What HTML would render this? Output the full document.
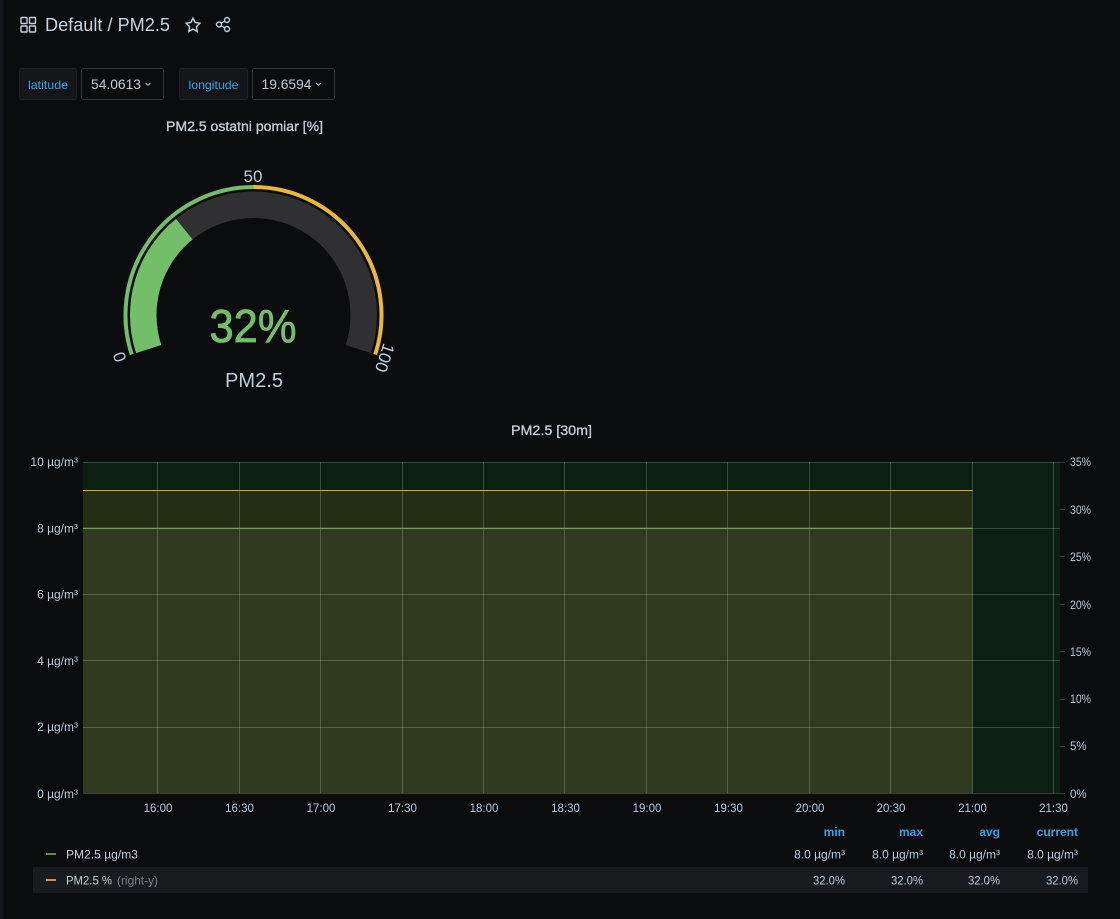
<!DOCTYPE html>
<html><head><meta charset="utf-8"><style>
html,body{margin:0;padding:0;background:#0b0c0e;width:1120px;height:919px;overflow:hidden}
svg{position:absolute;left:0;top:0}
text{font-family:"Liberation Sans",sans-serif;}
</style></head><body>
<svg width="1120" height="919" viewBox="0 0 1120 919">
<rect width="1120" height="919" fill="#0b0c0e"/>
<rect width="3" height="919" fill="#141619"/>
<!-- header -->
<g fill="none" stroke="#c7d0d9" stroke-width="1.4">
<rect x="21" y="17.5" width="6" height="6" rx=".8"/><rect x="29.500" y="17.5" width="6" height="6" rx=".8"/>
<rect x="21" y="26" width="6" height="6" rx=".8"/><rect x="29.500" y="26" width="6" height="6" rx=".8"/>
<path d="M193 18.200l2.100 4.300 4.800.7-3.500 3.400.8 4.800-4.200-2.300-4.200 2.300.8-4.800-3.500-3.400 4.800-.7z"/>
<circle cx="219" cy="24.500" r="2.500"/><circle cx="227" cy="20" r="2.500"/><circle cx="227" cy="29" r="2.500"/>
<path d="M221.200 23.200l3.600-2M221.200 25.800l3.600 2"/>
</g>
<text x="45" y="31" font-size="18" fill="#c9d3dc" textLength="125" lengthAdjust="spacingAndGlyphs">Default / PM2.5</text>
<!-- variables -->
<rect x="19.500" y="68.500" width="57" height="31" rx="2" fill="#141619" stroke="#202226"/>
<text x="28" y="89" font-size="12" fill="#33a2e5" textLength="40" lengthAdjust="spacingAndGlyphs">latitude</text>
<rect x="81.500" y="68.500" width="82" height="31" rx="2" fill="#0b0c0e" stroke="#2c3235"/>
<text x="91" y="89" font-size="14" fill="#c0cedb" textLength="50" lengthAdjust="spacingAndGlyphs">54.0613</text>
<path d="M145.500 83l2.500 2.200 2.500-2.200" fill="none" stroke="#c7d0d9" stroke-width="1"/>
<rect x="179.500" y="68.500" width="68" height="31" rx="2" fill="#141619" stroke="#202226"/>
<text x="188.500" y="89" font-size="12" fill="#33a2e5" textLength="50" lengthAdjust="spacingAndGlyphs">longitude</text>
<rect x="252.500" y="68.500" width="82" height="31" rx="2" fill="#0b0c0e" stroke="#2c3235"/>
<text x="261.500" y="89" font-size="14" fill="#c0cedb" textLength="50" lengthAdjust="spacingAndGlyphs">19.6594</text>
<path d="M316 83l2.500 2.200 2.500-2.200" fill="none" stroke="#c7d0d9" stroke-width="1"/>
<!-- gauge -->
<text x="244.500" y="131" font-size="13.500" fill="#c7d0d9" stroke="#c7d0d9" stroke-width=".3" text-anchor="middle" textLength="157" lengthAdjust="spacingAndGlyphs">PM2.5 ostatni pomiar [%]</text>
<path d="M175.980 218.870A123.500 123.500 0 0 1 370.950 353.160L345.750 344.970A97 97 0 0 0 192.610 239.500Z" fill="#303032"/>
<path d="M136.050 353.160A123.500 123.500 0 0 1 175.980 218.870L192.610 239.500A97 97 0 0 0 161.250 344.970Z" fill="#73bf69"/>
<path d="M131.760 354.550A128 128 0 0 1 253.500 187" fill="none" stroke="#73bf69" stroke-width="4"/>
<path d="M253.500 187A128 128 0 0 1 375.240 354.550" fill="none" stroke="#eab839" stroke-width="4"/>
<text x="253" y="182" font-size="17" fill="#bccddc" text-anchor="middle">50</text>
<text transform="translate(119.500 357) rotate(-108)" font-size="17" fill="#bccddc" text-anchor="middle" y="6">0</text>
<text transform="translate(385 358) rotate(108)" font-size="17" fill="#bccddc" text-anchor="middle" y="6" textLength="29" lengthAdjust="spacingAndGlyphs">100</text>
<text x="253" y="342" font-size="46" fill="#73bf69" stroke="#73bf69" stroke-width=".8" text-anchor="middle" textLength="87" lengthAdjust="spacingAndGlyphs">32%</text>
<text x="254" y="387" font-size="20" fill="#bccddc" text-anchor="middle" textLength="58" lengthAdjust="spacingAndGlyphs">PM2.5</text>
<!-- chart -->
<text x="551.500" y="435" font-size="13.500" fill="#c7d0d9" stroke="#c7d0d9" stroke-width=".3" text-anchor="middle" textLength="81" lengthAdjust="spacingAndGlyphs">PM2.5 [30m]</text>
<rect x="83" y="462" width="977" height="332" fill="#0b2012"/>
<rect x="83" y="490.500" width="889.500" height="303.500" fill="#242e15"/>
<rect x="83" y="528" width="889.500" height="266" fill="#2f3a1e"/>
<path d="M83 527.500H972.500" stroke="#3a4a24" stroke-width="1" shape-rendering="crispEdges"/>
<g stroke="#ffffff" stroke-opacity=".19" stroke-width="1" shape-rendering="crispEdges">
<path d="M83 462.500H1060M83 528.500H1060M83 594.500H1060M83 660.500H1060M83 727.500H1060"/>
<path d="M157.500 462V794M239.500 462V794M320.500 462V794M402.500 462V794M483.500 462V794M564.500 462V794M646.500 462V794M727.500 462V794M809.500 462V794M890.500 462V794M972.500 462V794M1053.500 462V794"/>
</g>
<g stroke="#3a3d3f" stroke-width="1" shape-rendering="crispEdges">
<path d="M83 793.500H1065M1060 462.500H1065M1060 509.500H1065M1060 556.500H1065M1060 604.500H1065M1060 651.500H1065M1060 699.500H1065M1060 746.500H1065"/>
</g>
<path d="M83 490.500H972.500" stroke="#e0ac2c" stroke-width="1" shape-rendering="crispEdges"/>
<path d="M83 528.500H972.500" stroke="#739f5c" stroke-width="1" shape-rendering="crispEdges"/>
<g font-size="12" fill="#b9cbdb" text-anchor="end">
<text x="78" y="466">10 µg/m³</text><text x="78" y="532.500">8 µg/m³</text><text x="78" y="598.500">6 µg/m³</text><text x="78" y="665">4 µg/m³</text><text x="78" y="731">2 µg/m³</text><text x="78" y="798">0 µg/m³</text>
</g>
<g font-size="11.500" fill="#b9cbdb">
<text x="1070" y="466" textLength="21" lengthAdjust="spacingAndGlyphs">35%</text><text x="1070" y="514" textLength="21" lengthAdjust="spacingAndGlyphs">30%</text><text x="1070" y="561" textLength="21" lengthAdjust="spacingAndGlyphs">25%</text><text x="1070" y="609" textLength="21" lengthAdjust="spacingAndGlyphs">20%</text><text x="1070" y="656" textLength="21" lengthAdjust="spacingAndGlyphs">15%</text><text x="1070" y="703" textLength="21" lengthAdjust="spacingAndGlyphs">10%</text><text x="1070" y="750">5%</text><text x="1070" y="798">0%</text>
</g>
<g font-size="11.500" fill="#b9cbdb" text-anchor="middle">
<text x="158" y="812">16:00</text><text x="239.500" y="812">16:30</text><text x="321" y="812">17:00</text><text x="402.500" y="812">17:30</text><text x="484" y="812">18:00</text><text x="565.500" y="812">18:30</text><text x="647" y="812">19:00</text><text x="728.500" y="812">19:30</text><text x="810" y="812">20:00</text><text x="891" y="812">20:30</text><text x="972.500" y="812">21:00</text><text x="1053.500" y="812">21:30</text>
</g>
<!-- legend -->
<rect x="33" y="867" width="1055" height="26" fill="#1a1b1f"/>
<g font-size="12" font-weight="bold" fill="#33a2e5" text-anchor="end">
<text x="845" y="836">min</text><text x="923" y="836">max</text><text x="1000" y="836">avg</text><text x="1078" y="836">current</text>
</g>
<rect x="46" y="853" width="10" height="2" fill="#5f8a50"/>
<rect x="46" y="879" width="10" height="2" fill="#c29a35"/>
<g font-size="12" fill="#c7d0d9">
<text x="66" y="858.500" textLength="72" lengthAdjust="spacingAndGlyphs">PM2.5 µg/m3</text>
<text x="66" y="884.500" textLength="46" lengthAdjust="spacingAndGlyphs">PM2.5 %</text>
<text x="117" y="884.500" fill="#7b8087" textLength="41" lengthAdjust="spacingAndGlyphs">(right-y)</text>
</g>
<g font-size="12" fill="#b9cbdb" text-anchor="end">
<text x="845" y="858.500">8.0 µg/m³</text><text x="923" y="858.500">8.0 µg/m³</text><text x="1000" y="858.500">8.0 µg/m³</text><text x="1078" y="858.500">8.0 µg/m³</text>
</g>
<g font-size="12" fill="#b9cbdb">
<text x="813" y="884.500" textLength="32" lengthAdjust="spacingAndGlyphs">32.0%</text><text x="891" y="884.500" textLength="32" lengthAdjust="spacingAndGlyphs">32.0%</text><text x="968" y="884.500" textLength="32" lengthAdjust="spacingAndGlyphs">32.0%</text><text x="1046" y="884.500" textLength="32" lengthAdjust="spacingAndGlyphs">32.0%</text>
</g>
</svg>
</body></html>
